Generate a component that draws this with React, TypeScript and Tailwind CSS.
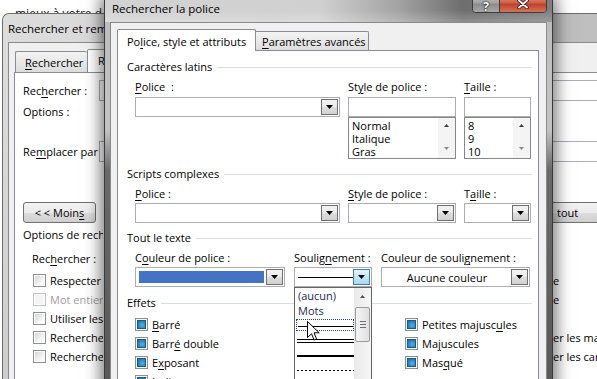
import React from 'react';

type Kids = { children?: React.ReactNode };

// souligné des touches d'accès (raccourcis clavier Windows)
function U({ children }: Kids) {
  return <span className="underline underline-offset-[2px]">{children}</span>;
}

function Tri({ up, color }: { up?: boolean; color: string }) {
  return (
    <svg width="7" height="4" viewBox="0 0 7 4">
      <path d={up ? 'M0 4H7L3.5 0Z' : 'M0 0H7L3.5 4Z'} fill={color} />
    </svg>
  );
}

function SmallTri({ up, color }: { up?: boolean; color: string }) {
  return (
    <svg width="5" height="3" viewBox="0 0 5 3">
      <path d={up ? 'M0 3H5L2.5 0Z' : 'M0 0H5L2.5 3Z'} fill={color} />
    </svg>
  );
}

function DropBtn({ hot }: { hot?: boolean }) {
  return (
    <div
      className={
        hot
          ? 'w-[17px] h-full flex items-center justify-center border border-[#3c7fb1] bg-[linear-gradient(to_bottom,#e5f4fc,#c4e5f6_50%,#a7d9f5)]'
          : 'w-[17px] h-full flex items-center justify-center border border-[#707070] bg-[linear-gradient(to_bottom,#f2f2f2,#ebebeb_50%,#dddddd_50%,#d2d2d2)]'
      }
    >
      <Tri color="#000" />
    </div>
  );
}

function Combo({ className, hot, children }: { className: string; hot?: boolean } & Kids) {
  return (
    <div className={`h-[20px] flex border border-[#abadb3] bg-white p-px ${className}`}>
      <div className="flex-1 min-w-0 flex items-center">{children}</div>
      <DropBtn hot={hot} />
    </div>
  );
}

function List({ items }: { items: string[] }) {
  return (
    <div className="h-[42px] flex border border-[#828790] bg-white">
      <div className="flex-1 pl-[3px] pt-px leading-[13px]">
        {items.map((i) => (
          <div key={i}>{i}</div>
        ))}
      </div>
      <div className="w-[17px] flex flex-col items-center justify-between pt-[6px] pb-[8px] bg-[#f4f4f4]">
        <SmallTri up color="#3c3c3c" />
        <SmallTri color="#8a8a8a" />
      </div>
    </div>
  );
}

function Group({ title, className }: { title: React.ReactNode; className: string }) {
  return (
    <div className={`h-[14px] flex items-center ${className}`}>
      <span className="leading-[14px] whitespace-nowrap">{title}</span>
      <div className="flex-1 h-px ml-[5px] bg-[#d5dfe5]" />
    </div>
  );
}

function CheckOn() {
  return (
    <div className="w-[13px] h-[13px] shrink-0 border border-[#8e8f8f] bg-[#f6f6f6] p-px">
      <div className="w-full h-full border border-[#1d5a86] bg-[radial-gradient(circle_at_60%_60%,#4fb6e6,#2a86c2_60%,#1c6aa0)]" />
    </div>
  );
}

function CheckOff({ disabled }: { disabled?: boolean }) {
  return (
    <div
      className={
        disabled
          ? 'w-[13px] h-[13px] shrink-0 border border-[#c2c2c2] bg-white p-px'
          : 'w-[13px] h-[13px] shrink-0 border border-[#8e8f8f] bg-white p-px'
      }
    >
      <div
        className={
          disabled
            ? 'w-full h-full bg-[#f4f4f4]'
            : 'w-full h-full bg-[linear-gradient(135deg,#d6d6d6,#f7f7f7_70%,#ffffff)]'
        }
      />
    </div>
  );
}

function Effect({ label }: { label: React.ReactNode }) {
  return (
    <div className="h-[19px] flex items-center gap-[4px] whitespace-nowrap">
      <CheckOn />
      <span>{label}</span>
    </div>
  );
}

// ─────────────────────────────────────────────
// Fenêtre arrière : Rechercher et remplacer
// (seules les parties gauche et droite dépassent de la fenêtre avant)
// ─────────────────────────────────────────────
function BackDialog() {
  const rows: { label: string; right: string; disabled?: boolean }[] = [
    { label: 'Respecter la casse', right: 'e' },
    { label: 'Mot entier', right: 'e', disabled: true },
    { label: 'Utiliser les caractères génériques', right: '' },
    { label: 'Recherche phonétique (anglais)', right: 'er les marques de ponctuation' },
    { label: 'Rechercher toutes les formes des mots', right: 'er les caractères d’espacement' },
  ];

  return (
    <div className="absolute left-[2px] top-[13px] w-[720px] h-[380px] flex flex-col rounded-tl-[7px] border-l border-t border-[#6b6b6b] bg-[linear-gradient(to_bottom,#dedede,#cdcdcd)]">
      <div className="h-[28px] shrink-0 flex items-center pl-[5px] text-[11.5px] rounded-tl-[7px] bg-[linear-gradient(to_right,#dcdcdc,#d3d3d3_40%,#bdbdbd_78%,#c6c6c6)]">
        <span className="w-[96px] overflow-hidden whitespace-nowrap">Rechercher et remplacer</span>
      </div>
      <div className="flex-1 ml-[5px] flex flex-col border-l border-t border-[#8a8a8a] bg-[#f0f0f0]">
        <div className="h-[23px] mt-[6px] ml-[6px] flex items-end">
          <div className="w-[72px] h-[21px] pl-[9px] pt-[3px] border-l border-t border-[#898c95] rounded-t-[2px] bg-[linear-gradient(to_bottom,#f3f3f3,#e8e8e8_50%,#dcdcdc)] whitespace-nowrap">
            <U>R</U>echercher
          </div>
          <div className="w-[86px] h-[24px] -mb-px pl-[10px] pt-[3px] border-x border-t border-[#898c95] rounded-t-[2px] bg-white">
            <span className="inline-block w-[7px] overflow-hidden whitespace-nowrap align-top">Remplacer</span>
          </div>
        </div>
        <div className="flex-1 ml-[5px] flex flex-col border-l border-t border-[#898c95] bg-white pl-[8px]">
          <div className="mt-[7px] h-[21px] flex items-center">
            <span className="w-[76px] shrink-0 whitespace-nowrap">
              Rec<U>h</U>ercher :
            </span>
            <div className="flex-1 h-[21px] border border-[#abadb3] bg-white mr-[20px]" />
          </div>
          <div className="h-[20px] flex items-center">Options :</div>
          <div className="mt-[20px] h-[21px] flex items-center">
            <span className="w-[76px] shrink-0 whitespace-nowrap">
              Re<U>m</U>placer par :
            </span>
            <div className="flex-1 h-[21px] border border-[#abadb3] bg-white mr-[20px]" />
          </div>
          <div className="mt-[40px] h-[21px] flex">
            <div className="w-[73px] h-[21px] flex items-center justify-center rounded-[3px] border border-[#707070] bg-[linear-gradient(to_bottom,#f2f2f2,#ebebeb_50%,#dddddd_50%,#cfcfcf)] whitespace-nowrap">
              &lt; &lt; Moin<U>s</U>
            </div>
            <div className="ml-[444px] w-[110px] h-[21px] flex items-center pl-[16px] rounded-[3px] border border-[#707070] bg-[linear-gradient(to_bottom,#f2f2f2,#ebebeb_50%,#dddddd_50%,#cfcfcf)] whitespace-nowrap">
              tout
            </div>
          </div>
          <div className="mt-[4px] h-[15px] w-[80px] overflow-hidden whitespace-nowrap">Options de recherche</div>
          <div className="mt-[9px] h-[15px] pl-[9px] whitespace-nowrap">
            Rec<U>h</U>ercher :
          </div>
          <div className="mt-[5px] flex flex-col">
            {rows.map((r) => (
              <div key={r.label} className="h-[19px] grid grid-cols-[80px_450px_1fr] items-center whitespace-nowrap">
                <div className="flex items-center gap-[4px] pl-[10px] overflow-hidden">
                  <CheckOff disabled={r.disabled} />
                  <span className={r.disabled ? 'text-[#a0a0a0]' : ''}>{r.label}</span>
                </div>
                <div />
                <span>{r.right}</span>
              </div>
            ))}
          </div>
        </div>
      </div>
    </div>
  );
}

// ─────────────────────────────────────────────
// Fenêtre avant : Rechercher la police
// ─────────────────────────────────────────────
function FrontDialog() {
  return (
    <div className="absolute left-[104px] top-0 w-[449px] h-[400px] flex flex-col border-x border-[#3a3a3a] bg-[linear-gradient(to_bottom,#bcbcbc,#c3c3c3_130px,#6a6a6a_170px,#575757)] shadow-[0_0_14px_4px_rgba(0,0,0,0.5)]">
      {/* barre de titre */}
      <div className="h-[22px] shrink-0 flex items-start bg-[linear-gradient(to_bottom,rgba(255,255,255,0)_45%,rgba(255,255,255,0.22)),linear-gradient(to_right,#d3d3d3,#d0d0d0_48%,#a2a2a2_66%,#6e6e6e_80%,#808080)]">
        <span className="ml-[7px] mt-px text-[11.5px] leading-[16px] whitespace-nowrap">Rechercher la police</span>
        <div className="ml-auto mr-[5px] -mt-[6px] h-[19px] flex rounded-b-[4px] border border-[#3b3b3b] overflow-hidden">
          <div className="w-[27px] flex items-center justify-center border-r border-[#3b3b3b] bg-[linear-gradient(to_bottom,#c4c4c4,#a2a2a2_45%,#8c8c8c_55%,#a9a9a9)]">
            <span className="mt-[6px] text-white font-bold text-[12px] leading-none [text-shadow:0_0_2px_#000,0_0_1px_#000]">?</span>
          </div>
          <div className="w-[46px] flex items-center justify-center bg-[linear-gradient(to_bottom,#e49a87,#cf5f47_45%,#c0432b_55%,#d4735c)]">
            <svg width="12" height="10" viewBox="0 0 12 10">
              <path d="M2 1.5L10 8.5M10 1.5L2 8.5" stroke="#4a1a12" strokeWidth="3.6" strokeLinecap="round" />
              <path d="M2 1.5L10 8.5M10 1.5L2 8.5" stroke="#fff" strokeWidth="1.8" strokeLinecap="round" />
            </svg>
          </div>
        </div>
      </div>

      {/* zone client */}
      <div className="flex-1 mx-[5px] flex flex-col border-x border-t border-[#8a8a8a] bg-[#f0f0f0] pl-[6px] pr-[7px]">
        <div className="h-[21px] mt-[6px] flex items-end relative z-10">
          <div className="w-[139px] h-[22px] -mb-px pl-[9px] pt-[4px] border-x border-t border-[#898c95] rounded-t-[2px] bg-white whitespace-nowrap">
            Po<U>l</U>ice, style et attributs
          </div>
          <div className="w-[113px] h-[19px] pl-[6px] pt-[2px] border-r border-t border-[#898c95] rounded-tr-[2px] bg-[linear-gradient(to_bottom,#f3f3f3,#e9e9e9_50%,#dddddd)] whitespace-nowrap">
            <U>P</U>aramètres avancés
          </div>
        </div>

        <div className="flex-1 flex flex-col border border-[#898c95] bg-white pl-[9px] pr-[6px]">
          <Group title="Caractères latins" className="mt-[9px]" />
          <div className="mt-[6px] ml-[8px] flex gap-[8px]">
            <div className="w-[205px]">
              <div className="h-[14px] leading-[14px] whitespace-nowrap">
                <U>P</U>olice&nbsp;&nbsp;:
              </div>
              <Combo className="mt-[3px]" />
            </div>
            <div className="w-[108px]">
              <div className="h-[14px] leading-[14px] whitespace-nowrap">
                St<U>y</U>le de police :
              </div>
              <div className="mt-[3px] h-[20px] border border-[#abadb3] bg-white" />
              <List items={['Normal', 'Italique', 'Gras']} />
            </div>
            <div className="w-[67px]">
              <div className="h-[14px] leading-[14px] whitespace-nowrap">
                <U>T</U>aille :
              </div>
              <div className="mt-[3px] h-[20px] border border-[#abadb3] bg-white" />
              <List items={['8', '9', '10']} />
            </div>
          </div>

          <Group title="Scripts complexes" className="mt-[8px]" />
          <div className="mt-[6px] ml-[8px] flex gap-[8px]">
            <div className="w-[205px]">
              <div className="h-[14px] leading-[14px] whitespace-nowrap">
                <U>P</U>olice :
              </div>
              <Combo className="mt-[2px]" />
            </div>
            <div className="w-[108px]">
              <div className="h-[14px] leading-[14px] whitespace-nowrap">
                <U>S</U>tyle de police :
              </div>
              <Combo className="mt-[2px]" />
            </div>
            <div className="w-[67px]">
              <div className="h-[14px] leading-[14px] whitespace-nowrap">
                T<U>a</U>ille :
              </div>
              <Combo className="mt-[2px]" />
            </div>
          </div>

          <Group title="Tout le texte" className="mt-[8px]" />
          <div className="mt-[6px] ml-[8px] flex gap-[9px]">
            <div className="w-[150px]">
              <div className="h-[14px] leading-[14px] whitespace-nowrap">
                C<U>o</U>uleur de police :
              </div>
              <Combo className="mt-[2px]">
                <div className="ml-[2px] mr-[2px] flex-1 h-[12px] bg-[#4472c4]" />
              </Combo>
            </div>
            <div className="w-[78px]">
              <div className="h-[14px] leading-[14px] whitespace-nowrap">
                Soulig<U>n</U>ement :
              </div>
              <Combo className="mt-[2px]" hot>
                <div className="ml-[2px] flex-1 h-px bg-black" />
              </Combo>
            </div>
            <div className="w-[149px]">
              <div className="h-[14px] leading-[14px] whitespace-nowrap">
                Couleur de souli<U>g</U>nement :
              </div>
              <Combo className="mt-[2px]">
                <div className="flex-1 text-center whitespace-nowrap">Aucune couleur</div>
              </Combo>
            </div>
          </div>

          <Group title="Effets" className="mt-[9px]" />
          <div className="mt-[5px] ml-[8px] grid grid-cols-[270px_1fr]">
            <Effect label={<><U>B</U>arré</>} />
            <Effect label={<>Petites majusc<U>u</U>les</>} />
            <Effect label={<>Barr<U>é</U> double</>} />
            <Effect label={<>Ma<U>j</U>uscules</>} />
            <Effect label={<>E<U>x</U>posant</>} />
            <Effect label={<>Mas<U>q</U>ué</>} />
            <Effect label={<>I<U>n</U>dice</>} />
          </div>
        </div>
      </div>
    </div>
  );
}

// liste déroulante ouverte du soulignement
function UnderlineList() {
  return (
    <div className="absolute left-[294px] top-[287px] w-[78px] h-[100px] flex border border-[#646464] bg-white">
      <div className="w-[59px] flex flex-col">
        <div className="h-[15px] pl-[3px] text-[#1b2850] whitespace-nowrap">(aucun)</div>
        <div className="h-[15px] pl-[3px] text-[#1b2850]">Mots</div>
        <div className="h-[15px] pt-px pb-[2px] pl-px">
          <div className="h-full flex items-center pl-px border border-dotted border-[#25408f]">
            <div className="flex-1 h-px mt-[2px] bg-black" />
          </div>
        </div>
        <div className="h-[15px] flex flex-col justify-center gap-[2px] pl-[2px]">
          <div className="h-px bg-black" />
          <div className="h-px bg-black" />
        </div>
        <div className="h-[15px] flex items-center pl-[2px]">
          <div className="flex-1 h-[2px] bg-black" />
        </div>
        <div className="h-[15px] flex items-center pl-[2px]">
          <div className="flex-1 h-px bg-[repeating-linear-gradient(to_right,#000_0px,#000_2px,transparent_2px,transparent_4px)]" />
        </div>
      </div>
      <div className="w-[17px] flex flex-col bg-[linear-gradient(to_right,#e9e9e9,#f6f6f6)]">
        <div className="h-[17px] flex items-center justify-center">
          <SmallTri up color="#4d4d4d" />
        </div>
        <div className="mt-[2px] mx-px h-[35px] flex flex-col items-center justify-center gap-[2px] rounded-[2px] border border-[#9a9a9a] bg-[linear-gradient(to_right,#f5f5f5,#e0e0e0)]">
          <div className="w-[6px] h-px bg-[#6c6c6c]" />
          <div className="w-[6px] h-px bg-[#6c6c6c]" />
          <div className="w-[6px] h-px bg-[#6c6c6c]" />
        </div>
      </div>
    </div>
  );
}

export default function App() {
  return (
    <div className="relative w-[597px] h-[379px] overflow-hidden bg-white font-['Open_Sans','Noto_Sans',sans-serif] text-[11px] leading-[15px] text-black">
      {/* texte du document derrière les fenêtres */}
      <div className="h-[13px] overflow-hidden pl-[15px] pt-[8px] text-[12px] leading-[12px] text-[#222] whitespace-nowrap">
        mieux à votre d
      </div>
      <BackDialog />
      <FrontDialog />
      <UnderlineList />
      {/* pointeur de la souris */}
      <svg className="absolute left-[307px] top-[321px]" width="13" height="20" viewBox="0 0 13 20">
        <path
          d="M0.5 0.5V16.5L4.5 12.8L7.2 19L9.6 18L7 11.8H12.2Z"
          fill="#fff"
          stroke="#000"
          strokeWidth="1"
        />
      </svg>
    </div>
  );
}
